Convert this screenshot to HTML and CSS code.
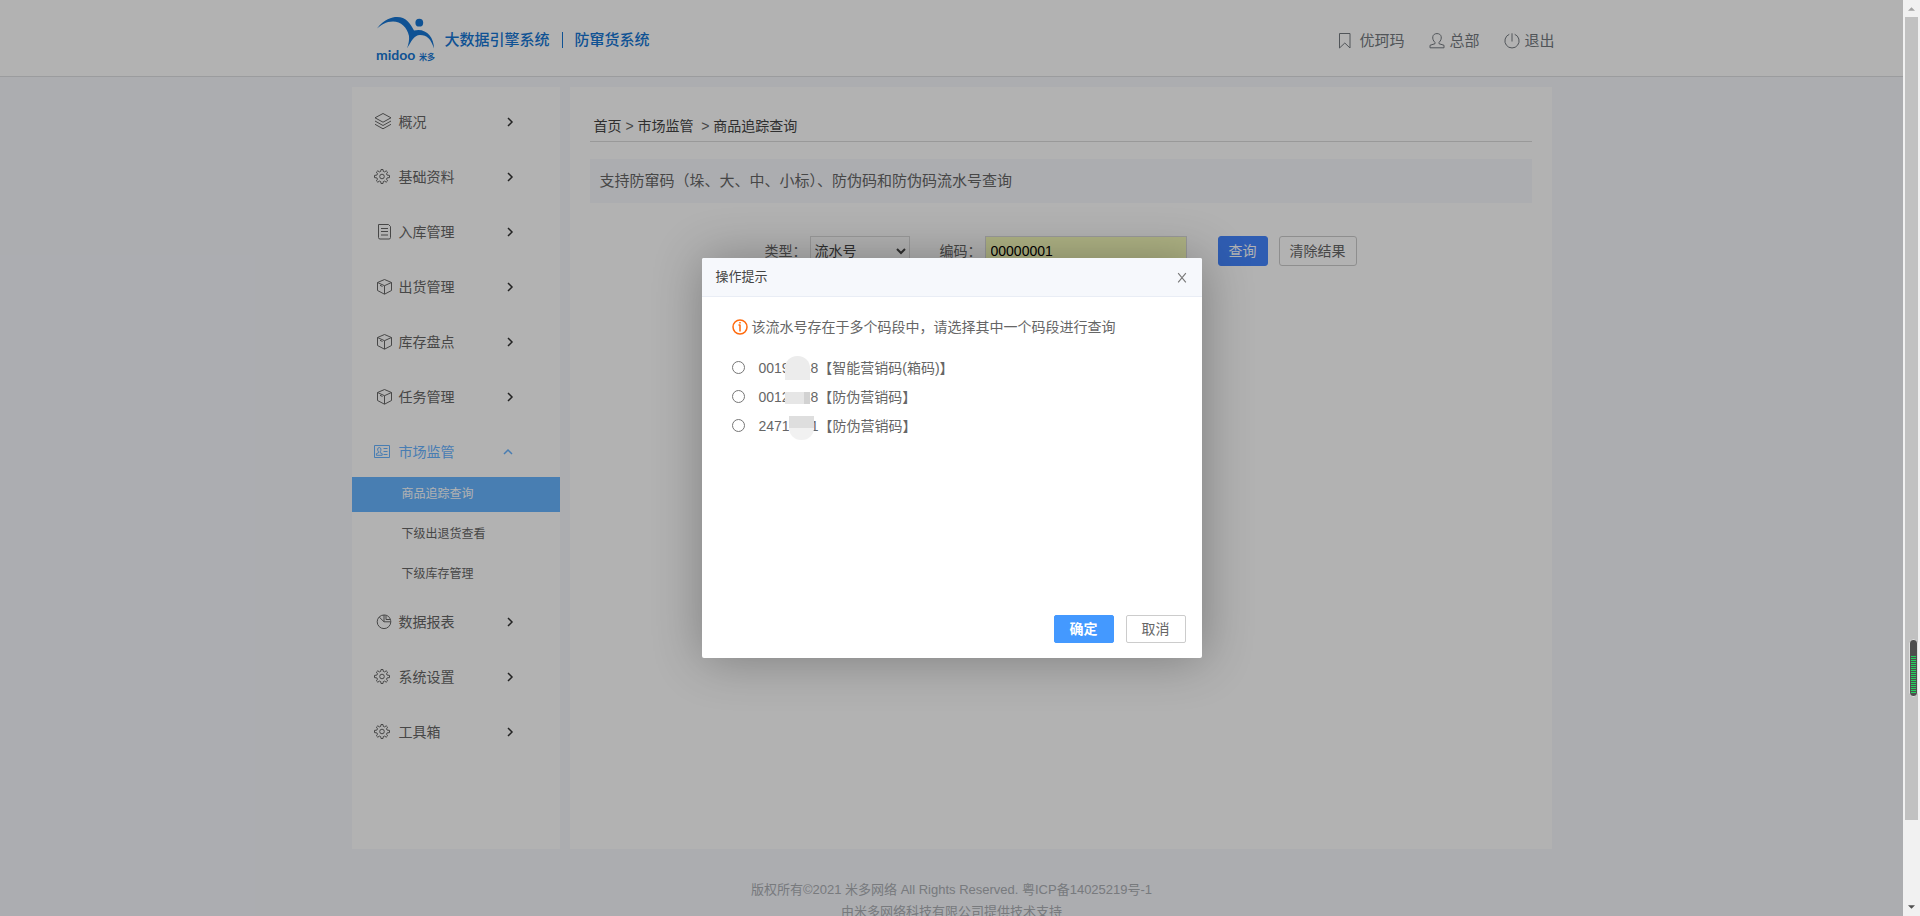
FILE: index.html
```html
<!DOCTYPE html>
<html lang="zh-CN">
<head>
<meta charset="utf-8">
<title>商品追踪查询</title>
<link rel="stylesheet" href="styles.css">
</head>
<body>
<svg class="sprite" aria-hidden="true">
  <symbol id="i-gear" viewBox="0 0 20 20">
    <path d="M7.700 4.400 8 2.500h2l.3 1.900 1.300.5 1.600-1.100 1.400 1.400-1.100 1.600.6 1.300 2.400.3v2.200l-2.400.3-.6 1.300 1.100 1.600-1.400 1.400-1.600-1.100-1.300.5-.3 1.900H8l-.3-1.900-1.300-.5-1.600 1.100-1.400-1.400 1.100-1.600-.6-1.300-2.400-.3V8.400l2.400-.3.6-1.300-1.100-1.600 1.400-1.400 1.600 1.100z"/>
    <circle cx="9" cy="9.500" r="2.300"/>
  </symbol>
  <symbol id="i-cube" viewBox="0 0 20 20">
    <path d="M11.500 2.500 18.500 5.500V13.500L11.500 17.200 4.500 13.500V5.500zM4.500 5.500 11.500 8.700 18.500 5.500M11.500 8.700V17M7 8.300 9.500 9.500"/>
  </symbol>
  <symbol id="i-right" viewBox="0 0 10 10"><path d="M3 1 7 5 3 9"/></symbol>
</svg>

<div class="page">
  <header class="topbar">
    <div class="wrap topbar-inner">
      <div class="brand">
        <svg class="logo" viewBox="0 0 58 46" role="img" aria-label="midoo 米多">
          <path d="M0 11.500C7 2 15 0 20 0C29 0 33 6 37 13.500C48 10.500 57 19 57 31.500C54 22 50 18 43 18C37 18 34 25 30 31.500C31.500 27 32.500 23 32 19C30 10 24 4.500 16 4.500C9 4.500 4 8 0 11.500Z"/>
          <circle cx="42.300" cy="5.700" r="3.900"/>
          <text class="logo-en" x="-1" y="43">midoo</text>
          <text class="logo-cn" x="42" y="43">米多</text>
        </svg>
        <span class="brand-name">大数据引擎系统</span>
        <span class="brand-line"></span>
        <span class="brand-name">防窜货系统</span>
      </div>
      <nav class="user-nav">
        <a href="#"><svg class="ico" viewBox="0 0 16 16"><path d="M2.500 .5h10.500v14.500l-5.200-5-5.300 5z"/></svg>优珂玛</a>
        <a href="#"><svg class="ico" viewBox="0 0 16 16"><path d="M6 9.500C4 7.500 3.500 5.500 3.800 3.700 4.200 1.600 5.800.6 8 .6s3.800 1 4.200 3.100c.3 1.800-.2 3.800-2.200 5.800v1.200l5 1.600v2.500H1v-2.500l5-1.600z"/></svg>总部</a>
        <a href="#"><svg class="ico" viewBox="0 0 16 16"><path d="M8 .3v8.200M5.300 1.300a7.100 7.100 0 1 0 5.400 0"/></svg>退出</a>
      </nav>
    </div>
  </header>

  <div class="wrap columns">
    <aside class="sidebar">
      <a class="menu" href="#"><svg class="mi" viewBox="0 0 20 20"><path d="M10 1.500 18 5.800 10 10.200 2 5.800zM2 9l8 4.500L18 9M2 12.300l8 4.500 8-4.500"/></svg>概况<svg class="arrow"><use href="#i-right"/></svg></a>
      <a class="menu" href="#"><svg class="mi"><use href="#i-gear"/></svg>基础资料<svg class="arrow"><use href="#i-right"/></svg></a>
      <a class="menu" href="#"><svg class="mi" viewBox="0 0 20 20"><path d="M5.500 2.500h10l2 2v11a1.500 1.500 0 0 1-1.500 1.500H7a1.500 1.500 0 0 1-1.500-1.500zM8 6.500h7M8 9.500h7M8 13h7"/></svg>入库管理<svg class="arrow"><use href="#i-right"/></svg></a>
      <a class="menu" href="#"><svg class="mi"><use href="#i-cube"/></svg>出货管理<svg class="arrow"><use href="#i-right"/></svg></a>
      <a class="menu" href="#"><svg class="mi"><use href="#i-cube"/></svg>库存盘点<svg class="arrow"><use href="#i-right"/></svg></a>
      <a class="menu" href="#"><svg class="mi"><use href="#i-cube"/></svg>任务管理<svg class="arrow"><use href="#i-right"/></svg></a>
      <a class="menu open" href="#"><svg class="mi" viewBox="0 0 20 20"><path d="M1.500 3.500h15v12h-15zM10.500 6.500h4M10.500 9.500h4M10.500 12.500h4M5.500 9.800C4 8 4.500 5.500 6.300 5.500S8.500 8 7.200 9.800v1l2 .8v1.700H3.400v-1.700l2.100-.8z"/></svg>市场监管<svg class="arrow up" viewBox="0 0 10 10"><path d="M1 7 5 3 9 7"/></svg></a>
      <div class="submenu">
        <a class="current" href="#">商品追踪查询</a>
        <a href="#">下级出退货查看</a>
        <a href="#">下级库存管理</a>
      </div>
      <a class="menu" href="#"><svg class="mi" viewBox="0 0 20 20"><path d="M11 3a6.800 6.800 0 1 0 6.800 6.800H11zM11 9.800 6.200 5M11 3c4 0 6.500 2.500 6.800 6.800M13 3.200V7.500h4.200"/></svg>数据报表<svg class="arrow"><use href="#i-right"/></svg></a>
      <a class="menu" href="#"><svg class="mi"><use href="#i-gear"/></svg>系统设置<svg class="arrow"><use href="#i-right"/></svg></a>
      <a class="menu" href="#"><svg class="mi"><use href="#i-gear"/></svg>工具箱<svg class="arrow"><use href="#i-right"/></svg></a>
    </aside>

    <main class="content">
      <nav class="crumbs"><a href="#">首页</a> &gt; <a href="#">市场监管</a>&nbsp; &gt; <a href="#">商品追踪查询</a></nav>
      <p class="hint">支持防窜码（垛、大、中、小标）、防伪码和防伪码流水号查询</p>
      <form class="search">
        <label for="type">类型：</label>
        <select id="type"><option>流水号</option></select>
        <label class="code-label" for="code">编码：</label>
        <input id="code" type="text" value="00000001">
        <button class="query" type="button">查询</button>
        <button class="clear" type="button">清除结果</button>
      </form>
    </main>
  </div>

  <footer class="footer">
    <p>版权所有©2021 米多网络 All Rights Reserved. 粤ICP备14025219号-1</p>
    <p>由米多网络科技有限公司提供技术支持</p>
  </footer>

  <div class="shade">
    <section class="dialog" role="dialog" aria-labelledby="dlg-title">
      <header class="dialog-head">
        <h2 id="dlg-title">操作提示</h2>
        <button class="close" type="button" aria-label="关闭"><svg viewBox="0 0 10 10"><path d="M1.500 1l7 8.500M8.500 1l-7 8.500"/></svg></button>
      </header>
      <div class="dialog-body">
        <p class="notice"><svg viewBox="0 0 16 16"><circle cx="8" cy="8" r="7"/><path d="M8 5.500v7M8 3v1.500M6.500 6H8"/></svg>该流水号存在于多个码段中，请选择其中一个码段进行查询</p>
        <label class="choice"><input type="radio" name="seg"><span class="num">0019<i class="gap"><b class="mask dome"></b></i>18</span>【智能营销码(箱码)】</label>
        <label class="choice"><input type="radio" name="seg"><span class="num">0012<i class="gap"><b class="mask flat"></b></i>28</span>【防伪营销码】</label>
        <label class="choice"><input type="radio" name="seg"><span class="num">2471<i class="gap wide"><b class="mask bowl"></b></i>1</span>【防伪营销码】</label>
      </div>
      <footer class="dialog-foot">
        <button class="ok" type="button">确定</button>
        <button class="cancel" type="button">取消</button>
      </footer>
    </section>
  </div>
</div>

<div class="scrollbar">
  <svg class="tip" viewBox="0 0 8 4"><path fill="#a3a3a3" d="M0 4 4 0 8 4z"/></svg>
  <div class="track"><div class="thumb"></div></div>
  <svg class="tip" viewBox="0 0 8 4"><path fill="#505050" d="M0 0 4 4 8 0z"/></svg>
  <div class="meter"><div class="level"></div></div>
</div>
</body>
</html>
```
FILE: styles.css
```css
* { box-sizing: border-box; }

body {
  margin: 0;
  display: flex;
  height: 100vh;
  overflow: hidden;
  font: 14px/20px "Liberation Sans", "Noto Sans CJK SC", sans-serif;
  color: #666;
}

a { color: inherit; text-decoration: none; }
p, h2 { margin: 0; }
button, input, select { font: inherit; }
svg { fill: none; stroke: currentColor; flex: none; }
.sprite { position: absolute; width: 0; height: 0; }

.page {
  position: relative;
  flex: 1;
  min-width: 0;
  overflow: hidden;
  background: #f6f8fd;
}

.wrap { width: 100%; max-width: 1200px; margin: 0 auto; }

/* top bar */
.topbar { background: #fff; border-bottom: 1px solid #dfe0e2; }
.topbar-inner {
  display: flex;
  justify-content: space-between;
  align-items: center;
  height: 76px;
  padding-left: 25px;
}
.brand { display: flex; align-items: center; padding-top: 3px; color: #1676d4; }
.logo { width: 58px; height: 46px; overflow: visible; fill: currentColor; stroke: none; }
.logo-en { font: bold 14px Lato, sans-serif; }
.logo-cn { font: bold 8px "Noto Sans CJK SC", sans-serif; }
.brand-name { font-size: 15px; font-weight: 500; }
.logo + .brand-name { margin-left: 10px; }
.brand-line { width: 1px; height: 16px; margin: 0 12px; background: currentColor; }
.user-nav { display: flex; gap: 25px; margin: 5px -3px 0 0; font-size: 15px; color: #747a80; }
.user-nav a { display: flex; align-items: center; gap: 4px; }
.user-nav a:first-child { gap: 6px; }
.ico { width: 16px; height: 16px; }

/* columns */
.columns { display: flex; gap: 10px; padding-top: 10px; }
.sidebar { width: 208px; min-height: 762px; padding-top: 5px; background: #fff; }
.menu { display: flex; align-items: center; height: 55px; padding: 4px 45px 0 21px; }
.mi { width: 20px; height: 20px; margin-right: 6px; }
.arrow { width: 10px; height: 10px; margin-left: auto; color: #333; stroke-width: 1.5; }
.menu.open, .menu.open .arrow { color: #67b3ff; }
.arrow.up { margin-right: 2px; }
.submenu { display: flex; flex-direction: column; gap: 5px; font-size: 12px; }
.submenu a { height: 35px; padding-left: 50px; line-height: 35px; }
.submenu .current { background: #67b5ff; color: #fff; }

.content { flex: 1; min-width: 0; padding: 29px 20px; background: #fff; }
.crumbs { padding: 0 4px 5px; border-bottom: 1px solid #dcdcdc; }
.crumbs a { color: #444; }
.hint { margin-top: 17px; padding: 12px 10px; background: #f6f8fd; font-size: 15px; }
.search {
  display: flex;
  align-items: center;
  justify-content: center;
  height: 30px;
  margin-top: 33px;
}
.search label { margin-right: 3px; }
.search .code-label { margin-left: 30px; }
.search select { width: 100px; height: 30px; border: 1px solid #dcdcdc; background: #fff; color: #444; }
.search input { width: 202px; height: 30px; padding: 0 5px; border: 1px solid #dcdcdc; background: #faffbd; color: #000; }
.search button { height: 30px; padding: 0 10px; border: 1px solid #ccc; border-radius: 3px; background: #fff; color: #666; }
.search .query { margin: 0 11px 0 31px; border-color: #4486ff; background: #4486ff; color: #fff; }

.footer { padding-top: 30px; text-align: center; font-size: 13px; line-height: 22px; color: #acafb4; }

/* dialog */
.shade {
  position: absolute;
  inset: 0;
  display: flex;
  align-items: center;
  justify-content: center;
  background: rgba(0, 0, 0, .3);
}
.dialog {
  display: flex;
  flex-direction: column;
  width: 500px;
  min-height: 400px;
  border-radius: 2px;
  background: #fff;
  box-shadow: 1px 1px 50px rgba(0, 0, 0, .3);
}
.dialog-head {
  display: flex;
  justify-content: space-between;
  align-items: center;
  height: 39px;
  padding: 0 14px;
  border-bottom: 1px solid #e9edf5;
  border-radius: 2px 2px 0 0;
  background: #f6f8fc;
}
.dialog-head h2 { font-size: 13px; font-weight: 400; color: #444; }
.close { display: flex; padding: 0; border: 0; background: none; color: #777; }
.close svg { width: 12px; height: 11px; }
.dialog-body { flex: 1; padding: 20px 30px; }
.notice { display: flex; align-items: center; gap: 4px; margin-bottom: 16px; }
.notice svg { width: 16px; height: 16px; color: #ff6a0d; stroke-width: 1.5; }
.choice { display: flex; align-items: center; height: 29px; }
.choice input { width: 13px; height: 13px; margin: 0 14px 0 0; }
.gap { position: relative; display: inline-block; width: 13px; height: 12px; }
.gap.wide { width: 21px; }
.mask { position: absolute; left: -5px; width: 25px; }
.mask.dome { top: -5px; height: 24px; border-radius: 12px 12px 0 0; background: #ececec; }
.mask.flat { top: 2px; height: 12px; background: linear-gradient(90deg, #e6e6e6 75%, #d2d2d2 75%); }
.mask.bowl { left: -1px; top: -3px; height: 24px; border-radius: 0 0 12px 12px; background: linear-gradient(#dedede 50%, #f1f1f1 50%); }
.dialog-foot { display: flex; justify-content: flex-end; gap: 12px; padding: 0 16px 15px; }
.dialog-foot button { width: 60px; height: 28px; padding: 0; border: 1px solid #ccc; border-radius: 2px; background: #fff; color: #666; }
.dialog-foot .ok { border-color: #4499ff; background: #4499ff; color: #fff; font-weight: 700; }

/* scroll bar */
.scrollbar {
  position: relative;
  display: flex;
  flex-direction: column;
  align-items: center;
  width: 17px;
  padding: 7px 0;
  background: #f1f1f1;
}
.tip { width: 7px; height: 4px; stroke: none; }
.track { flex: 1; width: 13px; margin: 6px 0; }
.thumb { height: 91%; background: #c1c1c1; }
.meter {
  position: absolute;
  top: 70%;
  right: 2px;
  width: 9px;
  height: 58px;
  margin-top: -2px;
  padding: 16px 1px 2px;
  border: 1px solid #ddd;
  border-radius: 4px;
  background: #4d4d4d;
}
.level { height: 100%; background: repeating-linear-gradient(#22d45e 0 1px, #4d4d4d 1px 2px); }
```
